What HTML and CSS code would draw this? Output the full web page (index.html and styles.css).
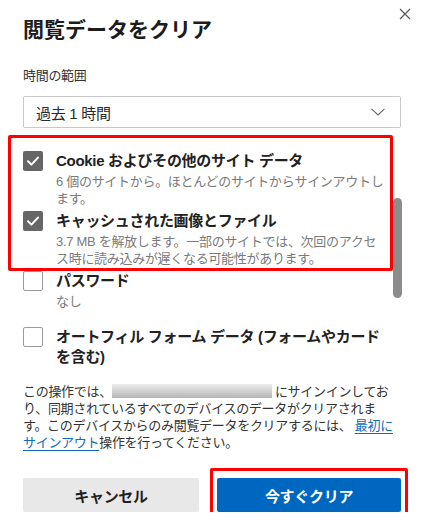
FILE: index.html
```html
<!DOCTYPE html>
<html lang="ja">
<head>
<meta charset="utf-8">
<title>閲覧データをクリア</title>
<link rel="stylesheet" href="styles.css">
</head>
<body>
<div class="dialog">
  <header class="dialog-header">
    <h1 class="dialog-title">閲覧データをクリア</h1>
    <button class="close-btn" aria-label="閉じる">
      <svg width="12" height="12" viewBox="0 0 12 12"><path d="M1 1 L11 11 M11 1 L1 11" stroke="#555" stroke-width="1.2" fill="none"/></svg>
    </button>
  </header>

  <div class="field-label">時間の範囲</div>
  <div class="select">
    <span class="select-value">過去 1 時間</span>
    <svg class="chevron" width="14" height="8" viewBox="0 0 14 8"><path d="M0.5 0.8 L7 7 L13.5 0.8" stroke="#666" stroke-width="1.1" fill="none"/></svg>
  </div>

  <div class="options">
    <div class="option">
      <span class="checkbox checked"><svg width="20" height="20" viewBox="0 0 20 20"><path d="M5 10.2 L8.4 13.6 L15 6.6" stroke="#fff" stroke-width="2" fill="none" stroke-linecap="round" stroke-linejoin="round"/></svg></span>
      <div class="option-text">
        <div class="option-title">Cookie およびその他のサイト データ</div>
        <div class="option-desc">6 個のサイトから。ほとんどのサイトからサインアウトし<br>ます。</div>
      </div>
    </div>
    <div class="option">
      <span class="checkbox checked"><svg width="20" height="20" viewBox="0 0 20 20"><path d="M5 10.2 L8.4 13.6 L15 6.6" stroke="#fff" stroke-width="2" fill="none" stroke-linecap="round" stroke-linejoin="round"/></svg></span>
      <div class="option-text">
        <div class="option-title">キャッシュされた画像とファイル</div>
        <div class="option-desc">3.7 MB を解放します。一部のサイトでは、次回のアクセ<br>ス時に読み込みが遅くなる可能性があります。</div>
      </div>
    </div>
    <div class="option">
      <span class="checkbox"></span>
      <div class="option-text">
        <div class="option-title">パスワード</div>
        <div class="option-desc">なし</div>
      </div>
    </div>
    <div class="option option-spaced">
      <span class="checkbox"></span>
      <div class="option-text">
        <div class="option-title">オートフィル フォーム データ (フォームやカード<br>を含む)</div>
      </div>
    </div>
    <div class="scroll-thumb"></div>
    <div class="highlight highlight-options"></div>
  </div>

  <p class="notice">この操作では、<span class="redacted"></span>にサインインしてお<br>り、同期されているすべてのデバイスのデータがクリアされま<br>す。このデバイスからのみ閲覧データをクリアするには、 <a class="link" href="#">最初に<br>サインアウト</a>操作を行ってください。</p>

  <div class="actions">
    <button class="btn btn-secondary">キャンセル</button>
    <div class="primary-wrap">
      <button class="btn btn-primary">今すぐクリア</button>
    </div>
  </div>
</div>
</body>
</html>
```

FILE: styles.css
```css
* { box-sizing: border-box; }

html, body {
  margin: 0;
  padding: 0;
  background: #fff;
}

body {
  font-family: "Liberation Sans", "Noto Sans CJK JP", sans-serif;
  color: #333;
  letter-spacing: -0.3px;
  text-spacing-trim: space-all;
}

.dialog {
  padding: 16px 21px 0 23px;
}

.dialog-header {
  display: flex;
  justify-content: space-between;
  align-items: flex-start;
  margin-right: -11px;
}

.dialog-title {
  margin: 0;
  font-size: 21px;
  line-height: 28px;
  font-weight: 700;
  color: #1c1c1c;
  letter-spacing: 0;
}

.close-btn {
  margin-top: -9px;
  width: 14px;
  height: 14px;
  padding: 1px;
  border: 0;
  background: none;
  display: flex;
  align-items: center;
  justify-content: center;
}

.field-label {
  margin-top: 23px;
  font-size: 13px;
  line-height: 18px;
  color: #333;
}

.select {
  margin-top: 11px;
  height: 32px;
  border: 1px solid #c8c8c8;
  border-radius: 2px;
  display: flex;
  align-items: center;
  justify-content: space-between;
  padding: 0 15px 0 12px;
}

.select-value {
  font-size: 15px;
  color: #2a2a2a;
}

.options {
  position: relative;
  margin-top: 23px;
  padding-right: 11px;
}

.option {
  display: grid;
  grid-template-columns: 20px 1fr;
  column-gap: 13px;
  margin-top: 4px;
}

.option:first-child { margin-top: 0; }
.option-spaced { margin-top: 17px; }

.checkbox {
  width: 20px;
  height: 20px;
  border: 1.5px solid #9a9a9a;
  border-radius: 2px;
  background: #fff;
  display: block;
}

.checkbox.checked {
  border: 0;
  background: #666;
}

.checkbox svg { display: block; }

.option-title {
  font-size: 15px;
  line-height: 20px;
  font-weight: 700;
  color: #222;
}

.option-desc {
  margin-top: 2px;
  font-size: 13px;
  line-height: 17px;
  color: #7a7a7a;
}

.scroll-thumb {
  position: absolute;
  right: -1px;
  top: 47px;
  width: 9px;
  height: 100px;
  border-radius: 5px;
  background: #8c8c8c;
}

.highlight {
  position: absolute;
  border: 3px solid #ff0000;
  pointer-events: none;
}

.highlight-options {
  left: -15px;
  top: -16px;
  width: 385px;
  height: 136px;
  border-radius: 2px;
}

.notice {
  margin: 16px 0 0;
  font-size: 13px;
  line-height: 17px;
  color: #333;
  white-space: nowrap;
}

.redacted {
  display: inline-block;
  vertical-align: top;
  margin-top: 1px;
  margin-right: 3px;
  width: 160px;
  height: 14px;
  background: linear-gradient(180deg, #ececec 0%, #cfcfcf 55%, #b4b4b4 100%);
}

.link {
  color: #0f6cbd;
  text-decoration: underline;
  text-underline-offset: 3px;
  text-decoration-thickness: 1px;
}

.actions {
  margin-top: 27px;
  display: grid;
  grid-template-columns: 176px 1fr;
  column-gap: 18px;
}

.btn {
  height: 34px;
  border: 0;
  border-radius: 2px;
  font-family: inherit;
  font-size: 15px;
  font-weight: 700;
  letter-spacing: -0.3px;
  cursor: pointer;
}

.btn-secondary {
  background: #e8e8e8;
  color: #1f1f1f;
}

.primary-wrap {
  position: relative;
  display: flex;
}

.primary-wrap .btn { flex: 1; }

.primary-wrap::after {
  content: "";
  position: absolute;
  left: -7px;
  right: -7px;
  top: -10px;
  bottom: -10px;
  border: 3px solid #ff0000;
  border-radius: 2px;
  pointer-events: none;
}

.btn-primary {
  background: #0067c0;
  color: #fff;
}
```
